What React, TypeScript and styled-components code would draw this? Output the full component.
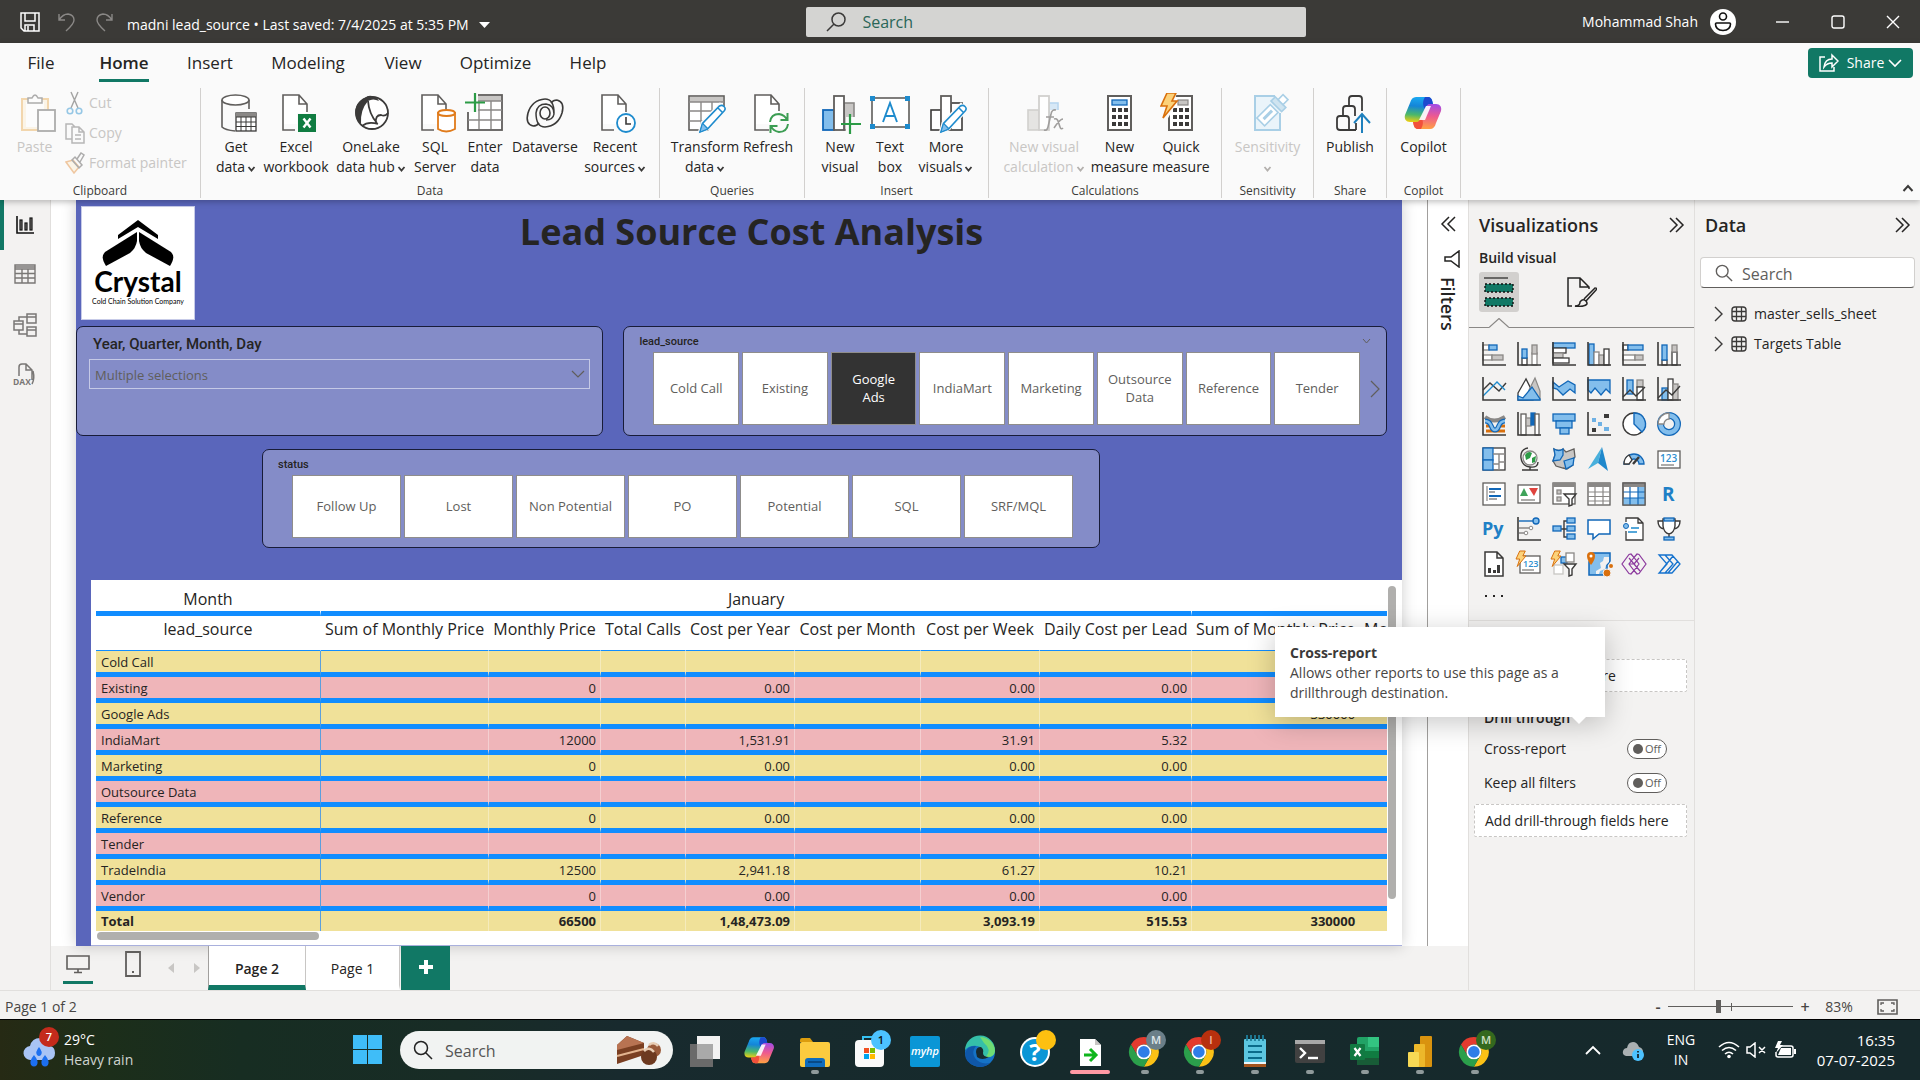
import React from "react";
import styled, { createGlobalStyle, css } from "styled-components";

const Global = createGlobalStyle`
  *, *::before, *::after { box-sizing: border-box; }
  html, body { margin: 0; padding: 0; }
  body {
    font-family: "Open Sans", "Noto Sans", sans-serif;
    font-size: 14px;
    line-height: 20px;
    color: #252423;
    background: #f3f2f1;
  }
  button, input, select { font: inherit; color: inherit; margin: 0; }
  button { background: none; border: 0; padding: 0; cursor: pointer; }
  svg { display: block; flex: none; }
  h1, h2, h3, p { margin: 0; }
`;

const GREEN = "#117865";
const INK = "#3b3a39";
const BLUE = "#1167b8";
const SKY = "#83beec";
const MID = "#8a8886";
const PALE = "#c8c6c4";

/* ---------- shell ---------- */

const Shell = styled.div`
  display: flex;
  flex-direction: column;
  min-height: 100vh;
`;

const TitleBar = styled.header`
  display: grid;
  grid-template-columns: 42fr 26fr 32fr;
  align-items: center;
  height: 43px;
  background: #3b3a37;
  color: #fff;
`;

const TitleLeft = styled.div`
  display: flex;
  align-items: center;
  gap: 17px;
  padding-left: 20px;
`;

const TitleText = styled.span`
  display: flex;
  align-items: center;
  gap: 10px;
  padding-top: 6px;
  margin-left: -4px;
  white-space: nowrap;
`;

const TopSearch = styled.label`
  display: flex;
  align-items: center;
  gap: 14px;
  height: 30px;
  padding: 0 20px;
  background: #d4d4d2;
  border-radius: 2px;
  input {
    flex: 1;
    min-width: 0;
    border: 0;
    outline: 0;
    background: none;
    font-size: 16px;
  }
  input::placeholder { color: #2a6658; opacity: 1; }
`;

const TitleRight = styled.div`
  display: flex;
  align-items: center;
  justify-content: flex-end;
  white-space: nowrap;
`;

const Avatar = styled.span`
  display: grid;
  place-items: center;
  width: 26px;
  height: 26px;
  margin: 0 19px 0 12px;
  border-radius: 50%;
  background: #fff;
`;

const WinButton = styled.button`
  display: grid;
  place-items: center;
  width: 55px;
  height: 40px;
`;

/* ---------- ribbon ---------- */

const Ribbon = styled.div`
  position: relative;
  z-index: 3;
  height: 157px;
  background: #fafafa;
  box-shadow: 0 2px 6px rgba(0, 0, 0, 0.25);
`;

const TabRow = styled.nav`
  display: flex;
  align-items: center;
  height: 45px;
  padding: 0 7px 2px 4px;
`;

const RibbonTab = styled.button<{ $w: number; $active?: boolean }>`
  width: ${(p) => p.$w}px;
  height: 40px;
  font-size: 17px;
  font-weight: ${(p) => (p.$active ? 600 : 400)};
  text-align: center;
  span {
    display: inline-block;
    padding: 6px 0;
    border-bottom: 3px solid ${(p) => (p.$active ? GREEN : "transparent")};
  }
`;

const ShareButton = styled.button`
  display: flex;
  align-items: center;
  justify-content: center;
  gap: 8px;
  width: 105px;
  height: 30px;
  margin: 0 0 3px auto;
  border-radius: 4px;
  background: ${GREEN};
  color: #fff;
  svg:last-child { margin-left: -4px; }
`;

const GroupRow = styled.div`
  display: flex;
  height: 110px;
`;

const Group = styled.section<{ $w: number; $pad?: number }>`
  display: flex;
  flex-direction: column;
  justify-content: space-between;
  width: ${(p) => p.$w}px;
  border-right: 1px solid #d2d0ce;
  & > div { display: flex; padding-left: ${(p) => p.$pad || 0}px; }
  h3 {
    font-size: 12px;
    font-weight: 400;
    line-height: 14px;
    text-align: center;
    color: ${INK};
  }
`;

const Tool = styled.button<{ $w: number; $off?: boolean }>`
  display: flex;
  flex-direction: column;
  align-items: center;
  width: ${(p) => p.$w}px;
  padding-top: 5px;
  white-space: nowrap;
  color: ${(p) => (p.$off ? "#c8c6c4" : "#252423")};
  svg { margin-bottom: 2px; }
  svg + span + span { display: flex; align-items: center; gap: 2px; min-height: 20px; }
  span svg { margin: 3px 0 0; }
`;

const ClipColumn = styled.div`
  display: flex;
  flex-direction: column;
`;

const ClipButton = styled.button`
  display: flex;
  align-items: center;
  gap: 4px;
  height: 30px;
  white-space: nowrap;
  color: #c8c6c4;
`;

const Collapse = styled.button`
  align-self: flex-end;
  margin: 0 6px 4px auto;
`;

/* ---------- workspace ---------- */

const Workspace = styled.div`
  display: flex;
  flex: 1;
  min-height: 0;
`;

const ViewRail = styled.nav`
  width: 51px;
  border-right: 1px solid #e1dfdd;
`;

const ViewButton = styled.button<{ $active?: boolean }>`
  display: grid;
  place-items: center;
  width: 50px;
  height: 50px;
  border-left: 4px solid ${(p) => (p.$active ? GREEN : "transparent")};
  padding-right: 4px;
`;

const Center = styled.div`
  display: flex;
  flex-direction: column;
  flex: 1;
  min-width: 0;
`;

const StageRow = styled.div`
  display: flex;
  flex: 1;
`;

const Stage = styled.main`
  display: flex;
  flex: 1;
  min-width: 0;
  padding: 0 25px;
  background: #fff;
`;

const Page = styled.div`
  display: flex;
  flex-direction: column;
  flex: 1;
  min-width: 0;
  background: #5a66bb;
  box-shadow: 0 0 14px rgba(0, 0, 0, 0.2);
`;

const PageHead = styled.div`
  display: flex;
  height: 126px;
  padding: 6px 94px 0 5px;
  h1 {
    flex: 1;
    font-size: 36px;
    line-height: 52px;
    font-weight: 700;
    text-align: center;
    white-space: nowrap;
  }
`;

const Logo = styled.div`
  display: flex;
  flex-direction: column;
  align-items: center;
  width: 114px;
  height: 114px;
  padding-top: 12px;
  background: #fff;
  border: 1px solid #c7cbe8;
  color: #000;
  strong {
    font-family: Lato, sans-serif;
    font-size: 28px;
    line-height: 28px;
    font-weight: 700;
  }
  small {
    font-family: Lato, sans-serif;
    font-size: 7px;
    line-height: 12px;
    font-weight: 400;
    white-space: nowrap;
  }
`;

const SlicerRow = styled.div`
  display: flex;
  gap: 20px;
  height: 110px;
  padding-right: 15px;
`;

const StatusRow = styled.div`
  display: flex;
  height: 99px;
  margin: 13px 302px 0 186px;
`;

const Slicer = styled.section<{ $grow: number }>`
  display: flex;
  flex-direction: column;
  flex: ${(p) => p.$grow} 1 0;
  min-width: 0;
  border: 1px solid #181c38;
  border-radius: 7px;
  background: #848cc8;
`;

const DateTitle = styled.label`
  padding: 7px 16px 5px;
  font-family: Roboto, sans-serif;
  font-size: 15px;
  font-weight: 500;
`;

const DateSelect = styled.div`
  display: grid;
  align-items: center;
  height: 30px;
  margin: 0 12px;
  border: 1px solid #c5c9e6;
  select, svg { grid-area: 1 / 1; }
  svg { justify-self: end; margin-right: 4px; pointer-events: none; }
  select {
    appearance: none;
    width: 100%;
    padding: 5px 5px 3px;
    border: 0;
    outline: 0;
    background: transparent;
    font-size: 13px;
    color: #605e5c;
  }
`;

const SlicerTitle = styled.h2`
  display: flex;
  align-items: center;
  justify-content: space-between;
  height: 25px;
  padding: 4px 15px 0;
  font-family: Roboto, sans-serif;
  font-size: 11px;
  line-height: 16px;
  font-weight: 500;
`;

const Tiles = styled.div<{ $n: number; $h: number }>`
  display: grid;
  grid-template-columns: repeat(${(p) => p.$n}, minmax(0, 1fr)) 23px;
  align-items: center;
  gap: 3px;
  height: ${(p) => p.$h}px;
  padding-left: 29px;
`;

const Tile = styled.button<{ $on?: boolean }>`
  height: 100%;
  padding: 0 9px 1px;
  border: 1px solid #8f8d8b;
  background: ${(p) => (p.$on ? "#333" : "#fff")};
  color: ${(p) => (p.$on ? "#fff" : "#605e5c")};
  font-size: 13px;
  line-height: 18px;
`;

const Next = styled.button`
  display: grid;
  place-items: center;
  height: 40px;
`;

/* ---------- matrix ---------- */

const Matrix = styled.section`
  display: grid;
  grid-template-columns: minmax(0, 1fr) 15px;
  flex: 1;
  margin: 32px 0 0 15px;
  padding: 6px 0 0 5px;
  background: #fff;
  border-bottom: 1px solid #a9b0dd;
`;

const MatrixScroll = styled.div`
  overflow: hidden;
`;

const Table = styled.table`
  width: 100%;
  table-layout: fixed;
  border-collapse: separate;
  border-spacing: 0;
  font-size: 13px;
  th, td {
    height: 26px;
    padding: 0 4px 0 5px;
    border-right: 1px solid rgba(255, 255, 255, 0.35);
    border-bottom: 5px solid #118dff;
    line-height: 20px;
    text-align: right;
    white-space: nowrap;
    overflow: hidden;
    font-weight: 400;
  }
  tr > :last-child { border-right: 0; }
  tbody tr > :nth-last-child(2), tfoot tr > :nth-last-child(2) { border-right: 0; padding-right: 5px; }
  thead th {
    height: 30px;
    padding: 2px 4px 0;
    font-size: 16px;
    line-height: 23px;
    text-align: center;
  }
  thead tr + tr th {
    height: 35px;
    border-bottom-width: 1px;
    vertical-align: top;
    &:last-child { text-align: left; }
  }
  tbody th, tfoot th { text-align: left; border-right-color: #5b9fdd; }
  tbody tr { background: #f0e199; }
  tbody tr:nth-child(even) { background: #efb5b9; }
  tfoot tr { background: #f0e199; }
  tfoot th, tfoot td { height: 20px; border-bottom: 0; font-weight: 700; line-height: 19px; }
`;

const HBar = styled.div`
  width: 222px;
  height: 8px;
  margin: 1px 0 0 1px;
  border-radius: 4px;
  background: #b0afad;
`;

const VBar = styled.div`
  width: 8px;
  height: 313px;
  margin-left: 1px;
  border-radius: 4px;
  background: #b0afad;
`;

/* ---------- page tabs + status ---------- */

const PageTabs = styled.div`
  display: flex;
  height: 44px;
`;

const LayoutButton = styled.button<{ $active?: boolean }>`
  display: grid;
  place-items: center;
  width: 30px;
  height: 38px;
  margin-left: 12px;
  border-bottom: 3px solid ${(p) => (p.$active ? GREEN : "transparent")};
  & + & { margin-left: 25px; }
`;

const Arrows = styled.div`
  display: flex;
  align-items: center;
  gap: 20px;
  padding: 0 8px 0 20px;
`;

const PageTab = styled.button<{ $active?: boolean }>`
  width: ${(p) => (p.$active ? 98 : 94)}px;
  padding-top: 6px;
  background: #fff;
  border-right: 1px solid #c8c6c4;
  border-bottom: 5px solid ${(p) => (p.$active ? GREEN : "#fff")};
  font-weight: ${(p) => (p.$active ? 600 : 400)};
  ${(p) =>
    p.$active &&
    css`
      border-left: 1px solid #a19f9d;
    `}
`;

const AddPage = styled.button`
  display: grid;
  place-items: center;
  width: 49px;
  padding-bottom: 2px;
  margin-left: 1px;
  background: ${GREEN};
`;

const StatusBar = styled.footer`
  display: flex;
  align-items: center;
  height: 29px;
  padding: 3px 22px 0 5px;
  border-top: 1px solid #e1dfdd;
  color: #484644;
  & > span:first-child { margin-right: auto; }
`;

const ZoomRange = styled.input`
  appearance: none;
  width: 125px;
  height: 14px;
  margin: 0 6px 0 4px;
  background: linear-gradient(#605e5c, #605e5c) center / 100% 1px no-repeat,
    linear-gradient(#605e5c, #605e5c) 63px center / 1px 8px no-repeat;
  &::-webkit-slider-thumb {
    appearance: none;
    width: 5px;
    height: 13px;
    background: #605e5c;
  }
`;

const ZoomMark = styled.button`
  width: 12px;
  font-size: 16px;
  font-weight: 600;
`;

const ZoomValue = styled.output`
  width: 50px;
  margin-right: 16px;
  text-align: center;
  padding-left: 6px;
`;

/* ---------- side panes ---------- */

const FiltersPane = styled.aside`
  display: flex;
  flex-direction: column;
  align-items: center;
  gap: 18px;
  width: 41px;
  padding-top: 16px;
  border-left: 1px solid #a19f9d;
  background: #fff;
  svg + svg { margin-left: 7px; }
  h2 {
    writing-mode: vertical-rl;
    margin-top: -9px;
    font-size: 18px;
    line-height: 20px;
    font-weight: 600;
  }
`;

const SidePane = styled.aside`
  width: 226px;
  border-left: 1px solid #e1dfdd;
`;

const PaneHead = styled.div`
  display: flex;
  align-items: center;
  justify-content: space-between;
  height: 49px;
  padding: 0 9px 0 10px;
  h2 { font-size: 18px; line-height: 24px; font-weight: 600; }
`;

const BuildTitle = styled.h3`
  padding: 0 10px;
  line-height: 18px;
  font-size: 14px;
  font-weight: 600;
`;

const ModeRow = styled.div`
  display: flex;
  gap: 43px;
  padding: 5px 10px 0;
`;

const ModeButton = styled.button<{ $on?: boolean }>`
  display: grid;
  place-items: center;
  width: 40px;
  height: 40px;
  border-radius: 3px;
  background: ${(p) => (p.$on ? "#d2d0ce" : "transparent")};
`;

const Notch = styled.div`
  display: flex;
  align-items: flex-end;
  height: 16px;
  &::before, &::after { content: ""; height: 1px; background: #8a8886; }
  &::before { width: 20px; }
  &::after { flex: 1; }
`;

const Gallery = styled.div`
  display: grid;
  grid-template-columns: repeat(6, 35px);
  grid-auto-rows: 35px;
  padding: 8px 0 0 7px;
  height: 293px;
  border-bottom: 1px solid #e1dfdd;
`;

const VisualButton = styled.button`
  display: grid;
  place-items: center;
`;

const Fields = styled.div`
  padding: 8px 7px 0 5px;
`;

const FieldTitle = styled.h3<{ $h: number }>`
  padding: 0 10px;
  height: ${(p) => p.$h}px;
  font-size: 14px;
  font-weight: 600;
`;

const DropBox = styled.div`
  padding: 6px 10px 5px;
  border: 1px dashed #c8c6c4;
  border-radius: 2px;
  background: #fff;
  white-space: nowrap;
`;

const Switches = styled.div`
  padding-top: 16px;
  & + ${DropBox} { margin-top: 4px; }
`;

const SwitchRow = styled.label`
  display: flex;
  align-items: center;
  justify-content: space-between;
  height: 34px;
  padding: 0 20px 0 10px;
`;

const Toggle = styled.span`
  display: flex;
  align-items: center;
  gap: 2px;
  width: 40px;
  height: 20px;
  padding-left: 5px;
  border: 1px solid #605e5c;
  border-radius: 10px;
  background: #fff;
  font-size: 11px;
  color: #605e5c;
  input {
    appearance: none;
    width: 10px;
    height: 10px;
    border-radius: 50%;
    background: #605e5c;
  }
`;

const DataSearch = styled.label`
  display: flex;
  align-items: center;
  gap: 9px;
  height: 31px;
  margin: 8px 5px 11px;
  padding: 0 14px;
  background: #fff;
  border: 1px solid #d2d0ce;
  border-bottom-color: #605e5c;
  border-radius: 4px;
  input {
    flex: 1;
    min-width: 0;
    border: 0;
    outline: 0;
    padding: 2px 0 0;
    background: none;
    font-size: 16px;
  }
  input::placeholder { color: #605e5c; opacity: 1; }
`;

const DataItem = styled.button`
  display: flex;
  align-items: center;
  gap: 7px;
  height: 30px;
  padding-left: 18px;
  white-space: nowrap;
  svg:first-child { margin-right: 1px; }
`;

const Tooltip = styled.div`
  position: absolute;
  z-index: 5;
  top: 627px;
  right: 315px;
  width: 330px;
  height: 90px;
  padding: 16px 15px;
  background: #fff;
  color: #484644;
  box-shadow: 0 6px 26px rgba(0, 0, 0, 0.22);
  strong { display: block; color: #3b3a39; }
  &::after {
    content: "";
    position: absolute;
    right: 19px;
    bottom: -7px;
    border: 7px solid transparent;
    border-top-color: #fff;
    border-bottom: 0;
  }
`;

/* ---------- taskbar ---------- */

const Taskbar = styled.footer`
  display: flex;
  align-items: center;
  height: 61px;
  border-top: 1px solid #000;
  color: #fff;
  background: linear-gradient(90deg, #262a14 0, #1c2e1a 110px, #172d22 240px, #182c26 460px, #182a2e 620px, #162a2c 1000px, #16292c 100%);
`;

const Weather = styled.button`
  display: flex;
  align-items: center;
  gap: 3px;
  width: 340px;
  padding-left: 22px;
  text-align: left;
  span span { display: block; line-height: 20px; }
  span span + span { color: #cfd4d0; }
`;

const StartButton = styled.button`
  display: grid;
  place-items: center;
  width: 55px;
  height: 58px;
`;

const TaskSearch = styled.label`
  display: flex;
  align-items: center;
  gap: 12px;
  width: 273px;
  height: 38px;
  margin: 0 4px 0 5px;
  padding: 0 10px 0 13px;
  border-radius: 19px;
  background: #f1f3f2;
  input {
    flex: 1;
    min-width: 0;
    border: 0;
    outline: 0;
    padding: 2px 0 0;
    background: none;
    font-size: 16px;
  }
  input::placeholder { color: #555; opacity: 1; }
`;

const TaskIcon = styled.button<{ $mark?: "open" | "front" }>`
  display: flex;
  flex-direction: column;
  align-items: center;
  width: 55px;
  height: 60px;
  padding-top: 9px;
  &::after {
    content: "";
    margin-top: 1px;
    height: 4px;
    border-radius: 2px;
    width: ${(p) => (p.$mark === "front" ? 40 : p.$mark ? 8 : 0)}px;
    background: ${(p) => (p.$mark === "front" ? "#ff99a4" : "#8f9a9b")};
  }
`;

const Tray = styled.div`
  display: flex;
  align-items: center;
  margin-left: auto;
  padding-right: 25px;
`;

const TrayItem = styled.button<{ $w: number }>`
  display: flex;
  align-items: center;
  justify-content: center;
  gap: 6px;
  width: ${(p) => p.$w}px;
`;

const TrayText = styled.button<{ $w: number; $end?: boolean }>`
  display: flex;
  flex-direction: column;
  align-items: ${(p) => (p.$end ? "flex-end" : "center")};
  width: ${(p) => p.$w}px;
  font-size: ${(p) => (p.$end ? 15 : 14)}px;
  line-height: 20px;
  white-space: nowrap;
`;

/* ---------- drawing helpers ---------- */

const box = (x: number, y: number, w: number, h: number, f = "#fff", s = INK, sw = 1.3) => (
  <rect x={x} y={y} width={w} height={h} fill={f} stroke={s} strokeWidth={sw} />
);
const ln = (d: string, s = INK, sw = 1.4, f = "none") => <path d={d} fill={f} stroke={s} strokeWidth={sw} />;

const Chev = ({ c = INK, s = 9 }: { c?: string; s?: number }) => (
  <svg width={s} height={s} viewBox="0 0 9 9">{ln("M1.5 3l3 3.5 3-3.5", c, 1.8)}</svg>
);
const Double = ({ left }: { left?: boolean }) => (
  <svg width="16" height="16" viewBox="0 0 16 16">
    {ln(left ? "M9 1L2 8l7 7M15 1L8 8l7 7" : "M1 1l7 7-7 7M7 1l7 7-7 7", "#252423", 1.5)}
  </svg>
);
const Lens = ({ c, s = 20, flip }: { c: string; s?: number; flip?: boolean }) => (
  <svg width={s} height={s} viewBox="0 0 20 20">
    {flip ? ln("M1 19l7-7M12.500 1a6.500 6.500 0 1 1 0 13 6.500 6.500 0 0 1 0-13z", c, 1.5) : ln("M19 19l-6-6M8 1.500a6.500 6.500 0 1 1 0 13 6.500 6.500 0 0 1 0-13z", c, 1.5)}
  </svg>
);

const docOpen = (
  <>
    <path d="M8 2h16l8 9v20H8z" fill="#fff" />
    {ln("M20 37H8V2h16l8 9v8M24 2v9h8", "#605e5c", 1.6)}
  </>
);
const pencil = (
  <>
    <path d="M16 39l2.500-9L36 12l5 5-17 18z" fill="#fff" stroke="#fafafa" strokeWidth="4" />
    {ln("M16 39l2.500-8.500L35.500 13q2.500-1.500 4.500.500t.500 4L23.500 36zM18.500 30.500l5 5M34 15l5 5", "#1e8bcd", 1.6, "#fff")}
    <path d="M16 39l2.500-8.500 5 5.500z" fill={SKY} stroke="#1e8bcd" />
  </>
);
const bolt = (x: number, y: number, k = 1) => (
  <path transform={`translate(${x} ${y}) scale(${k})`} d="M6 0h9l-4 8h5L2 25l4-12H0z" fill="#fcd27a" stroke="#d9700d" strokeWidth="1.600" />
);
const calc = (x: number) => (
  <>
    {box(x, 3, 23, 34, "#fff", "#605e5c", 2)}
    {[17, 24, 31].map((y) =>
      [0, 1, 2].map((i) => <rect key={`${y}-${i}`} x={x + 4 + i * 6} y={y - 2} width="4" height="4" fill={INK} />)
    )}
  </>
);

const Copilot = ({ size, id }: { size: number; id: string }) => (
  <svg width={size} height={size} viewBox="-1 -2 42 42">
    <defs>
      <linearGradient id={`${id}a`} x1="0.300" y1="0" x2="0.200" y2="1">
        <stop offset="0" stopColor="#1aa7f0" />
        <stop offset="0.350" stopColor="#1485d8" />
        <stop offset="0.700" stopColor="#4bb86a" />
        <stop offset="1" stopColor="#f2cf10" />
      </linearGradient>
      <linearGradient id={`${id}b`} x1="0.200" y1="1" x2="0.300" y2="0">
        <stop offset="0" stopColor="#a04be8" />
        <stop offset="0.500" stopColor="#ee5a8f" />
        <stop offset="1" stopColor="#ff9f45" />
      </linearGradient>
    </defs>
    <path transform="rotate(180 19 18)" fill={`url(#${id}b)`} d="M12 2h12c3 0 4 2 5 7h-3c-3 0-4 2-5 5l-2 8c-1 3-3 5-6 5H6c-4 0-6-3-5-7L6 8c1-4 3-6 6-6z" />
    <path fill={`url(#${id}a)`} d="M12 2h12c3 0 4 2 5 7h-3c-3 0-4 2-5 5l-2 8c-1 3-3 5-6 5H6c-4 0-6-3-5-7L6 8c1-4 3-6 6-6z" />
    <path fill="#1d49cf" d="M21 2h3c3 0 4 2 5 7h-3c-3 0-4 2-5 5-3-4-2-9 0-12z" />
    <path fill="#f2503b" d="M17 34h-3c-3 0-4-2-5-7h3c3 0 4-2 5-5 3 4 2 9 0 12z" />
    <path fill="#fff" d="M22 11h5l-6 14h-6z" opacity="0.900" />
  </svg>
);

const toolIcons: Record<string, React.ReactNode> = {
  paste: (
    <g opacity="0.400">
      {box(7, 6, 26, 31, "#fdeccb", "#e8a33d", 2)}
      {box(11, 9, 18, 25, "#fff", "none")}
      {ln("M13 10V5h4q3-6 6 0h4v5z", INK, 1.5, "#fff")}
      {box(23, 17, 17, 21, "#fff", INK, 1.8)}
    </g>
  ),
  get: (
    <>
      {ln("M7 7v27q3 3 13 4M34 7v9", "#605e5c", 1.6)}
      <ellipse cx="20.500" cy="7" rx="13.500" ry="5" fill="#fff" stroke="#605e5c" strokeWidth="1.600" />
      {box(21, 20, 20, 18, "#fff", INK)}
      <rect x="21" y="20" width="20" height="4" fill={MID} />
      {ln("M21 24h20M21 29h20M21 33.500h20M26 24v14M31 24v14M36 24v14", INK, 1)}
    </>
  ),
  excel: (
    <>
      {docOpen}
      <rect x="22" y="20" width="20" height="20" fill="#fafafa" />
      <rect x="23" y="21" width="18" height="18" fill="#107c41" />
      {ln("M28.500 25.500l7 9M35.500 25.500l-7 9", "#fff", 2.4)}
    </>
  ),
  onelake: (
    <>
      <circle cx="22" cy="20" r="16" fill="#fff" stroke={INK} strokeWidth="1.800" />
      <path d="M11 31C2 23 4 9 15 5q3-3 7-2 5 1 7 5-6-3-11 0-8 9-7 23z" fill={INK} />
      {ln("M18 8q1 13 9 22M26 30q-1-8 5-8 4 2 7-2M12 33q6-5 16-2", INK, 1.8)}
    </>
  ),
  sql: (
    <>
      {docOpen}
      <path d="M24 20v16q8 5 17 0V20z" fill="#fff" stroke="#e07b1b" strokeWidth="1.800" />
      <ellipse cx="32.500" cy="20" rx="8.500" ry="3" fill="#fff" stroke="#e07b1b" strokeWidth="1.800" />
    </>
  ),
  enter: (
    <>
      {box(4, 2, 34, 35, "#fff", "#605e5c", 1.8)}
      <rect x="5" y="3" width="32" height="5" fill={PALE} />
      {ln("M4 8h34M4 17h34M4 27h34M15 8v28M27 8v28", MID, 1.4)}
      <rect x="0" y="-1" width="14" height="20" fill="#fafafa" />
      {ln("M11 0v19M1 9.500h20", "#2c9b46", 2.2)}
    </>
  ),
  dataverse: (
    <>
      <ellipse cx="21" cy="20" rx="5" ry="6" fill="none" stroke={INK} strokeWidth="1.600" />
      {ln("M21 34q-9 0-9-14 1-9 10-9 8 1 8 10-1 6-8 6M21 6q9 0 9 14", INK, 1.500)}
      {ln("M9 33Q1 31 4 20 8 7 21 6M9 33q4 0 6-3M33 7q8 2 5 13-4 13-17 14M33 7q-4 0-6 3", INK, 1.600)}
    </>
  ),
  recent: (
    <>
      {docOpen}
      <circle cx="32" cy="30" r="9" fill="#fff" stroke="#1e8bcd" strokeWidth="1.800" />
      {ln("M32 24v7h5", INK, 1.6)}
    </>
  ),
  transform: (
    <>
      {box(5, 3, 35, 34, "#fff", "#605e5c", 1.6)}
      <rect x="6" y="4" width="33" height="5" fill={PALE} />
      {ln("M5 9h35M5 18h35M5 28h35M17 9v28M28 9v28", MID, 1.4)}
      <path d="M24 38h17V16z" fill="#fafafa" />
      {pencil}
    </>
  ),
  refresh: (
    <>
      <path d="M8 2h16l8 9v20H8z" fill="#fff" />
      {ln("M22 37H8V2h16l8 9v7M24 2v9h8", "#605e5c", 1.6)}
      {ln("M23 29q1-8 9-8 6 1 8 6M40.500 20v7h-7M41 31q-1 8-9 8-6-1-8-6M23.500 40v-7h7", "#3c9d53", 2)}
    </>
  ),
  newvisual: (
    <>
      {box(25, 10, 10, 27, PALE, MID, 1.6)}
      {box(4, 17, 11, 20, SKY, BLUE, 1.8)}
      {box(15, 3, 10, 34, "#fff", "#605e5c", 1.8)}
      <rect x="27" y="24" width="15" height="18" fill="#fafafa" />
      {ln("M31 21v20M22 31h20", "#2c9b46", 2.2)}
    </>
  ),
  textbox: (
    <>
      {box(3, 5, 37, 29, "#fff", "#605e5c", 1.6)}
      {[1, 36].map((x) => [3, 31].map((y) => <rect key={`${x}${y}`} x={x} y={y} width="5" height="5" fill="#1e8bcd" />))}
      {ln("M14 29l7-19 7 19M16.500 23h9", "#1e8bcd", 1.9)}
    </>
  ),
  more: (
    <>
      {box(6, 17, 10, 20, "#fff", INK, 1.6)}
      {box(26, 10, 11, 27, "#fff", INK, 1.6)}
      {box(16, 3, 10, 34, "#fff", "#605e5c", 1.8)}
      {pencil}
    </>
  ),
  calcvisual: (
    <g opacity="0.800">
      {box(5, 17, 11, 20, "#e1dfdd", PALE, 1.6)}
      {box(26, 10, 9, 14, "#cfe4f6", "#a9cfee", 1.6)}
      {box(16, 3, 10, 34, "#fff", PALE, 1.8)}
      <rect x="27" y="17" width="15" height="25" fill="#fafafa" />
      {ln("M33 17q-4-1-5 4l-3 13q-1 4-4 3M23 24h8M31 26q3-1 4 2l2 6q1 3 3 1M40 26q-3 0-9 9", MID, 1.6)}
    </g>
  ),
  measure: (
    <>
      {calc(9)}
      {box(13, 7, 15, 5, SKY, BLUE, 1.3)}
    </>
  ),
  quick: (
    <>
      {calc(9)}
      {box(18, 7, 10, 5, PALE, MID, 1.2)}
      <path d="M0 0h17l-3 9h3L7 27H4z" fill="#fafafa" />
      {bolt(1, 0)}
    </>
  ),
  sensitivity: (
    <>
      {ln("M33 20v17H8V3h20", "#a9cfe6", 2, "#eaf4fa")}
      <g transform="rotate(-45 24 18)">
        {box(9, 13, 19, 11, "#fff", "#a9cfe6", 1.6)}
        {ln("M13 18.500h12", "#a9cfe6", 3)}
        {box(31, 11, 6, 15, "#cfe4f0", "#a9cfe6", 1.6)}
        {box(37, 15, 7, 7, "#fff", "#a9cfe6", 1.6)}
      </g>
    </>
  ),
  publish: (
    <>
      {ln("M20 12V6q0-3 3-3h7q3 0 3 3v12M14 22v-6q0-3 3-3h6q3 0 3 3v7M27 37H11q-3 0-3-3V26q0-3 3-3h6q3 0 3 3v11M27 30v7", INK, 1.8)}
      {ln("M33 40V22M25 30l8-9 8 9", "#1e80bd", 2)}
    </>
  ),
};

const Label = ({ a, b, drop, off }: { a: string; b?: string; drop?: boolean; off?: boolean }) => (
  <>
    <span>{a}</span>
    <span>
      {b}
      {drop && <Chev c={off ? "#b3b0ad" : INK} />}
    </span>
  </>
);

type ToolDef = { id: string; w: number; a: string; b?: string; drop?: boolean; off?: boolean };
const groups: { name: string; w: number; pad: number; tools: ToolDef[] }[] = [
  {
    name: "Data", w: 459, pad: 9,
    tools: [
      { id: "get", w: 52, a: "Get", b: "data", drop: true },
      { id: "excel", w: 68, a: "Excel", b: "workbook" },
      { id: "onelake", w: 82, a: "OneLake", b: "data hub", drop: true },
      { id: "sql", w: 46, a: "SQL", b: "Server" },
      { id: "enter", w: 54, a: "Enter", b: "data" },
      { id: "dataverse", w: 66, a: "Dataverse" },
      { id: "recent", w: 74, a: "Recent", b: "sources", drop: true },
    ],
  },
  {
    name: "Queries", w: 145, pad: 7,
    tools: [
      { id: "transform", w: 76, a: "Transform", b: "data", drop: true },
      { id: "refresh", w: 50, a: "Refresh" },
    ],
  },
  {
    name: "Insert", w: 184, pad: 12,
    tools: [
      { id: "newvisual", w: 46, a: "New", b: "visual" },
      { id: "textbox", w: 54, a: "Text", b: "box" },
      { id: "more", w: 58, a: "More", b: "visuals", drop: true },
    ],
  },
  {
    name: "Calculations", w: 233, pad: 11,
    tools: [
      { id: "calcvisual", w: 88, a: "New visual", b: "calculation", drop: true, off: true },
      { id: "measure", w: 63, a: "New", b: "measure" },
      { id: "quick", w: 60, a: "Quick", b: "measure" },
    ],
  },
  { name: "Sensitivity", w: 92, pad: 0, tools: [{ id: "sensitivity", w: 91, a: "Sensitivity", drop: true, off: true }] },
  { name: "Share", w: 73, pad: 0, tools: [{ id: "publish", w: 72, a: "Publish" }] },
  { name: "Copilot", w: 74, pad: 0, tools: [{ id: "copilot", w: 73, a: "Copilot" }] },
];

/* ---------- visual gallery ---------- */

const axis = ln("M1 0v23h23", INK, 1.6);
const boltMini = bolt(-1, -1, 0.62);
const funnel = ln("M12 12h12l-4 5v6l-3 1v-7z", INK, 1.4, "#fff");

const visuals: [string, React.ReactNode][] = [
  ["Stacked bar chart", <>{box(1, 3, 6, 5, "#fff", MID)}{box(7, 3, 8, 5, SKY, BLUE)}{box(1, 13, 9, 5, "#fff", MID)}{box(10, 13, 11, 5, PALE, MID)}{axis}</>],
  ["Stacked column chart", <>{box(5, 16, 5, 7)}{box(5, 7, 5, 9, SKY, BLUE)}{box(15, 11, 5, 12, "#fff", MID)}{box(15, 3, 5, 9, PALE, MID)}{axis}</>],
  ["Clustered bar chart", <>{box(1, 1, 22, 5, SKY, BLUE)}{box(1, 6, 13, 5)}{box(1, 11, 10, 5, PALE, MID)}{box(1, 16, 16, 5)}{axis}</>],
  ["Clustered column chart", <>{box(2, 2, 5, 21, SKY, BLUE)}{box(7, 10, 5, 13, "#fff", MID)}{box(12, 13, 5, 10, PALE, MID)}{box(17, 7, 5, 16)}{axis}</>],
  ["100% stacked bar chart", <>{box(1, 3, 5, 5)}{box(6, 3, 15, 5, SKY, BLUE)}{box(1, 13, 12, 5, "#fff", MID)}{box(13, 13, 8, 5, PALE, MID)}{axis}</>],
  ["100% stacked column chart", <>{box(5, 18, 5, 5)}{box(5, 3, 5, 15, SKY, BLUE)}{box(15, 10, 5, 13)}{box(15, 3, 5, 7, PALE, MID)}{axis}</>],
  ["Line chart", <>{ln("M1 13l7-7 9 8 7-8")}{ln("M1 19L15 5l8 8", "#1e8bcd")}{axis}</>],
  ["Area chart", <>{ln("M1 16l8-14 7 14v7H1z", INK, 1.3, "#fff")}{ln("M12 13l6-12 5 13v9H12z", MID, 1.2, PALE)}{ln("M1 23v-4l5 2 9-11 8 12v1z", BLUE, 1.3, SKY)}</>],
  ["Stacked area chart", <>{ln("M1 5l6 5 9-6 7 4v8l-5-4-7 6-6-6-4-1z", BLUE, 1.3, SKY)}{axis}</>],
  ["100% stacked area chart", <>{ln("M1 3h22v13l-4-4-5 6-6-7-4 5-3-3z", BLUE, 1.3, SKY)}{axis}</>],
  ["Line and stacked column", <>{box(5, 3, 6, 14, SKY, BLUE)}{box(15, 3, 6, 7, PALE, MID)}{box(15, 10, 6, 13)}{ln("M1 20l7-7 6 6 9-9")}{axis}</>],
  ["Line and clustered column", <>{box(5, 11, 6, 12, SKY, BLUE)}{box(11, 2, 5, 21)}{box(16, 7, 5, 16, PALE, MID)}{ln("M1 21l8-8 6 5 8-9")}{axis}</>],
  ["Ribbon chart", <>{ln("M4 14h6M17 14h6M4 19h19", "#d9700d", 3)}{ln("M3 5q9 7 20 0", MID, 4)}{ln("M3 9c8 0 5 9 10 9s2-9 10-9", BLUE, 5)}{ln("M3 9c8 0 5 9 10 9s2-9 10-9", SKY, 2.5)}{axis}</>],
  ["Waterfall chart", <>{box(4, 2, 5, 21, "#fff", "#605e5c")}{box(9, 6, 5, 8, PALE, MID)}{box(14, 1, 4, 12, BLUE, BLUE)}{box(18, 2, 4, 21, "#fff", "#605e5c")}{axis}</>],
  ["Funnel chart", <>{box(1, 2, 22, 7, SKY, BLUE)}{box(4, 9, 16, 7, SKY, BLUE)}{box(8, 16, 9, 6, SKY, BLUE)}</>],
  ["Scatter chart", <><path d="M5 6h4v4H5zM11 10h4v4h-4zM17 15h5v4h-5z" fill="#6fb1e4" /><path d="M17 2h5v4h-5zM5 16h4v4H5z" fill={INK} />{axis}</>],
  ["Pie chart", <><circle cx="12" cy="12" r="11" fill="#fff" stroke={INK} strokeWidth="1.400" />{ln("M12 1v11l8 8A11 11 0 0 0 12 1z", BLUE, 1.4, SKY)}</>],
  ["Donut chart", <><circle cx="12" cy="12" r="8.500" fill="none" stroke={BLUE} strokeWidth="7" /><circle cx="12" cy="12" r="8.500" fill="none" stroke={SKY} strokeWidth="4.500" />{ln("M12 1A11 11 0 0 0 1 12h6a5 5 0 0 1 5-5z", MID, 1.3, "#fff")}</>],
  ["Treemap", <>{box(1, 1, 22, 22)}{box(1, 1, 10, 12, SKY, BLUE)}{box(1, 13, 10, 10, SKY, BLUE)}{ln("M11 7h12M17 7v10M11 17h6v6M17 15h6", MID)}</>],
  ["Map", <><circle cx="13" cy="11" r="7" fill="#fff" stroke={MID} strokeWidth="1.300" /><path d="M8 8q3-5 7-2l-2 5-4 2zM15 11l4-2-1 6-3 1z" fill="#2c9b46" />{ln("M11 1Q3 2 4 11q1 8 9 9t8-5M13 20v3M5 23h16")}</>],
  ["Filled map", <>{ln("M2 2q5 3 9 0l3 3 8-3 1 8-3 3 1 5-6 4-4-1-7-2-3-5 2-6z", "#605e5c", 1.3, PALE)}{ln("M2 2q5 3 9 0v6l-3 5-7 1 2-6z", BLUE, 1.3, SKY)}{ln("M12 14l10-3-1 7-7 4z", BLUE, 1.3, SKY)}</>],
  ["Azure map", <><path d="M15 0L1 22l10-6z" fill="#48b0dc" /><path d="M15 0l6 24-10-8z" fill="#1e88cc" /></>],
  ["Gauge", <>{ln("M2 17a10 10 0 0 1 20 0h-5a5 5 0 0 0-10 0z", BLUE, 1.3, SKY)}{ln("M2 17a10 10 0 0 1 5-9l3 5-3 4z", INK, 1.3, "#fff")}{ln("M11 17l6-7", INK, 2.4)}</>],
  ["Card", <>{box(1, 4, 22, 17, "#fff", "#605e5c")}<text x="3" y="15" fontSize="10" fontWeight="600" fill="#2f8fd0">123</text>{ln("M4 18h13", MID)}</>],
  ["Multi-row card", <>{box(1, 1, 22, 22, "#fff", "#605e5c")}{ln("M5 4v15", MID, 1.2)}{ln("M7 7h12M7 14h12", BLUE, 2)}{ln("M7 10h6M7 17h8", MID)}</>],
  ["KPI", <>{box(1, 3, 22, 18, "#fff", "#605e5c")}<path d="M3 14l4-8 4 8z" fill="#3fa35a" /><path d="M12 6h9l-4 8z" fill="#e0443e" />{ln("M4 18h14", MID)}</>],
  ["Slicer", <>{box(1, 1, 22, 21, "#fff", "#605e5c")}<rect x="1" y="1" width="22" height="4" fill={MID} />{box(5, 8, 4, 4, PALE, MID)}{box(5, 15, 4, 4, PALE, MID)}{funnel}</>],
  ["Table", <>{box(1, 1, 22, 22, "#fff", "#605e5c")}<rect x="1" y="1" width="22" height="4" fill={MID} />{ln("M1 10h22M1 14.500h22M1 19h22M8 5v18M16 5v18", MID, 1.2)}</>],
  ["Matrix", <>{box(1, 1, 22, 22, "#fff", "#605e5c")}<rect x="16" y="5" width="7" height="18" fill={SKY} /><rect x="1" y="16" width="22" height="7" fill={SKY} /><rect x="1" y="1" width="22" height="4" fill={MID} />{ln("M1 10h22M1 16h22M8 5v18M16 5v18", BLUE, 1.2)}{box(1, 1, 22, 22, "none", "#605e5c")}</>],
  ["R script visual", <text x="5" y="19" fontSize="19" fontWeight="700" fill="#1e80c6">R</text>],
  ["Python visual", <text x="0" y="18" fontSize="18" fontWeight="700" fill="#1e80c6">Py</text>],
  ["Key influencers", <>{ln("M2 4h15", BLUE)}<circle cx="19" cy="4" r="3" fill={SKY} stroke={BLUE} strokeWidth="1.400" />{ln("M2 11h10M2 16h5", MID)}<circle cx="14" cy="11" r="1.800" fill="#fff" stroke={MID} /><circle cx="9" cy="16" r="1.800" fill="#fff" stroke={MID} />{axis}</>],
  ["Decomposition tree", <>{ln("M9 12h6M16 4h-4v16h4")}{box(1, 9, 8, 5, SKY, BLUE)}{box(15, 1, 8, 5, SKY, BLUE)}{box(15, 9, 8, 5, SKY, BLUE)}{box(15, 17, 8, 5, SKY, BLUE)}</>],
  ["Q&A", ln("M1 3h22v14H12l-6 5v-5H1z", BLUE, 1.5, "#fff")],
  ["Narrative", <>{ln("M4 5V1h12l5 5v17H4v-9M16 1v5h5", INK, 1.3, "#fff")}<circle cx="4" cy="9" r="2.500" fill={SKY} stroke={BLUE} />{ln("M9 11h8M6 15h9", "#1e8bcd")}</>],
  ["Goals", <>{ln("M6 2h12v7q-1 7-6 8-5-1-6-8zM6 4H1q0 7 6 8M18 4h5q0 7-6 8M12 17v3", INK, 1.4, "#fff")}{box(7, 1, 10, 3, SKY, BLUE)}{box(7, 20, 10, 3, SKY, BLUE)}</>],
  ["Paginated report", <>{ln("M3 0h12l6 6v18H3zM15 0v6h6", INK, 1.5, "#fff")}<path d="M6 16h3v5H6zM11 18h3v3h-3zM15 13h3v8h-3z" fill={INK} /></>],
  ["New card", <>{box(3, 4, 20, 17, "#fff", "#605e5c")}<text x="6" y="15" fontSize="9" fontWeight="600" fill="#2f8fd0">123</text>{ln("M5 18h12", MID)}{boltMini}</>],
  ["New slicer", <>{box(9, 5, 6, 6, SKY, BLUE)}{box(14, 1, 8, 9, "#fff", MID)}{box(2, 13, 9, 9, "#fff", PALE)}{funnel}{boltMini}</>],
  ["ArcGIS map", <>{ln("M6 1h17v8l-3 4v10H2V10z", BLUE, 1.5, SKY)}<path d="M9 22v-3l5-3-1-5 3-2 1-4h5v5l-3 3-1 4-5 2-1 3z" fill="#f3f2f1" /><path d="M0 4a4 4 0 0 1 8 0q0 4-4 9-4-5-4-9z" fill="#d9700d" /><circle cx="4" cy="4" r="1.500" fill="#fff" /><circle cx="20" cy="21" r="4" fill="#d9700d" stroke="#f3f2f1" /><circle cx="24" cy="14" r="2" fill="#d9700d" /></>],
  ["Power Apps", ln("M9 2l3 3.500L15 2l2 .500L24 12l-7 9.500-2 .500-3-3.500L9 22l-2-.500L0 12l7-9.500zM12 5.500L7 12l5 6.500 5-6.500zM7 12h5M12 12l-5-6M12 12l6 7M12 12l5-6", "#8c3a9e", 1.2)],
  ["Power Automate", ln("M2 3h13l8 9-8 9H2l8-9zM8 3l8 9-8 9M16 4L3 20M21 9L11 21", "#1472ce", 1.3)],
];

/* ---------- matrix data ---------- */

const colWidths = [225, 168, 112, 85, 109, 126, 119, 152, 168];
const heads = ["Sum of Monthly Price", "Monthly Price", "Total Calls", "Cost per Year", "Cost per Month", "Cost per Week", "Daily Cost per Lead", "Sum of Monthly Price", "Monthly Price"];
const zero = ["", "0", "", "0.00", "", "0.00", "0.00", "", ""];
const none = ["", "", "", "", "", "", "", "", ""];
const rows: [string, string[]][] = [
  ["Cold Call", none],
  ["Existing", zero],
  ["Google Ads", ["", "", "", "", "", "", "", "330000", ""]],
  ["IndiaMart", ["", "12000", "", "1,531.91", "", "31.91", "5.32", "", ""]],
  ["Marketing", zero],
  ["Outsource Data", none],
  ["Reference", zero],
  ["Tender", none],
  ["TradeIndia", ["", "12500", "", "2,941.18", "", "61.27", "10.21", "", ""]],
  ["Vendor", zero],
];
const totals = ["", "66500", "", "1,48,473.09", "", "3,093.19", "515.53", "330000", ""];

/* ---------- taskbar icons ---------- */

const Badge = ({ c, t, k = "#fff", x = 30, y = 10 }: { c: string; t: string; k?: string; x?: number; y?: number }) => (
  <>
    <circle cx={x} cy={y} r="10" fill={c} />
    <text x={x} y={y + 4} fontSize="11" fontWeight="600" fill={k} textAnchor="middle">{t}</text>
  </>
);
const chrome = (
  <g transform="translate(4 9) scale(1.240)">
    <path fill="#e33b2e" d="M12 6h10.400A12 12 0 0 0 1.600 6l5.200 9A6 6 0 0 1 12 6z" />
    <path fill="#fbc116" d="M22.400 6H12a6 6 0 0 1 5.200 9L12 24A12 12 0 0 0 22.400 6z" />
    <path fill="#2b9f4b" d="M1.600 6A12 12 0 0 0 12 24l5.200-9a6 6 0 0 1-10.400 0z" />
    <circle cx="12" cy="12" r="6" fill="#fff" />
    <circle cx="12" cy="12" r="4.700" fill="#2f7de8" />
  </g>
);

const tasks: [string, "open" | "front" | undefined, React.ReactNode][] = [
  ["Task view", undefined, <><rect x="12" y="8" width="23" height="23" fill="#f2f2f2" /><rect x="5" y="16" width="23" height="23" fill="#6a6a6a" /><rect x="12" y="16" width="16" height="15" fill="#a9a9a9" /></>],
  ["Copilot", undefined, <svg x="3" y="6" width="34" height="34"><Copilot size={34} id="task" /></svg>],
  ["File Explorer", "open", <><path d="M5 12q0-2 2-2h8l3 4H5z" fill="#dc9d0e" /><rect x="5" y="14" width="30" height="25" rx="2" fill="#fccb3f" /><path d="M10 39v-6q0-3 3-3h14q3 0 3 3v6z" fill="#0f6cbd" /><rect x="13" y="33" width="14" height="2" fill="#084a86" /></>],
  ["Microsoft Store", undefined, <>{ln("M13 13V9h14v4", "#35c1f1", 2)}<rect x="5" y="12" width="29" height="27" rx="4" fill="#fafafa" /><path d="M14 20h5v5h-5z" fill="#f25022" /><path d="M20 20h5v5h-5z" fill="#7fba00" /><path d="M14 26h5v5h-5z" fill="#00a4ef" /><path d="M20 26h5v5h-5z" fill="#ffb900" /><Badge c="#4cc2ff" t="1" k="#111" x={31} y={12} /></>],
  ["myHP", undefined, <><rect x="5" y="8" width="30" height="31" rx="2" fill="#0a96d6" /><text x="20" y="27" fontSize="11" fontStyle="italic" fontWeight="600" fill="#fff" textAnchor="middle">myhp</text></>],
  ["Edge", undefined, <><circle cx="20" cy="24" r="15" fill="#1572c6" /><path d="M5 22a15 15 0 0 1 30 1q-1 7-9 6-4-1-3-4 0-6-6-7-7-1-12 4z" fill="#35bfa9" /><path d="M20 9a15 15 0 0 1 15 14q-1 7-9 6 6-8-2-14z" fill="#6fdc73" /><path d="M5 25q3-8 11-7-5 6-1 12 5 7 15 5-7 6-15 3Q5 35 5 25z" fill="#0f57a8" /><path d="M16 24q0-5 5-5 3 2 2 6 0 4 6 4-7 4-12 0z" fill="#182a2e" /></>],
  ["HP Support", undefined, <><circle cx="20" cy="24" r="15" fill="#fff" /><circle cx="20" cy="24" r="13" fill="#0a96d6" /><text x="20" y="33" fontSize="24" fontWeight="700" fill="#fff" textAnchor="middle">?</text><circle cx="31" cy="12" r="10" fill="#fdc010" /></>],
  ["Document transfer", "front", <><path d="M10 11h15l6 6v21H10z" fill="#fff" /><path d="M25 11v6h6z" fill="#c8c6c4" />{ln("M14 27h11M20 21l6 6-6 6", "#0fb51c", 3)}</>],
  ["Chrome M", "open", <>{chrome}<Badge c="#6b7f89" t="M" k="#dfe6ea" x={31} y={12} /></>],
  ["Chrome I", "open", <>{chrome}<Badge c="#b8300e" t="I" k="#f0b7a6" x={31} y={12} /></>],
  ["Notepad", "open", <><rect x="9" y="11" width="22" height="26" rx="1" fill="#5cc6e0" /><rect x="9" y="36" width="22" height="3" fill="#a3541d" /><path d="M9 34h22v2H9z" fill="#eaf7fb" />{ln("M13 18h14M13 24h14M13 30h14", "#0a6b8a", 1.8)}{ln("M12 7v6M16 7v6M20 7v6M24 7v6M28 7v6", "#1f7f9c", 1.8)}</>],
  ["Terminal", "open", <><rect x="5" y="12" width="30" height="23" rx="2" fill="#414141" /><path d="M5 12h30v4H5z" fill="#a8a8a8" />{ln("M10 20l5 5-5 5", "#fff", 2.4)}{ln("M18 30h10", "#fff", 2.4)}</>],
  ["Excel", "open", <><rect x="12" y="9" width="22" height="28" rx="2" fill="#21a366" /><path d="M23 9h11v10H23z" fill="#33c481" /><path d="M12 23h22v14H12z" fill="#107c41" /><path d="M12 30h22v7H12z" fill="#185c37" /><rect x="5" y="16" width="15" height="16" rx="1" fill="#117a42" />{ln("M9.500 20l6 8M15.500 20l-6 8", "#fff", 2.2)}</>],
  ["Power BI", "open", <><rect x="20" y="8" width="12" height="31" rx="1" fill="#d9930f" /><rect x="14" y="16" width="11" height="23" rx="1" fill="#edb82a" /><rect x="8" y="24" width="11" height="15" rx="1" fill="#f7d954" /></>],
  ["Chrome", "open", <>{chrome}<Badge c="#34691e" t="M" k="#cfe0c4" x={31} y={12} /></>],
];

const TABS: [string, number][] = [["File", 74], ["Home", 92], ["Insert", 80], ["Modeling", 116], ["View", 74], ["Optimize", 111], ["Help", 74]];

export default function App() {
  return (
    <Shell>
      <Global />
      <TitleBar>
        <TitleLeft>
          <svg width="20" height="20" viewBox="0 0 20 20">{ln("M1 1h18v18H4l-3-3zM5 1v8h10V1M5 19v-6h9v6M8 14v5", "#fff", 1.5)}</svg>
          <svg width="20" height="20" viewBox="0 0 20 20">{ln("M2 2v6h6M2 8Q6 2 11 2q6 1 6 6 0 4-8 11", "#8a8886", 1.4)}</svg>
          <svg width="20" height="20" viewBox="0 0 20 20">{ln("M18 2v6h-6M18 8Q14 2 9 2 3 3 3 8q0 4 8 11", "#8a8886", 1.4)}</svg>
          <TitleText>
            madni lead_source • Last saved: 7/4/2025 at 5:35 PM
            <svg width="11" height="6" viewBox="0 0 11 6"><path d="M0 0h11L5.500 6z" fill="#fff" /></svg>
          </TitleText>
        </TitleLeft>
        <TopSearch>
          <Lens c={INK} flip />
          <input type="search" placeholder="Search" aria-label="Search" />
        </TopSearch>
        <TitleRight>
          <span>Mohammad Shah</span>
          <Avatar>
            <svg width="18" height="20" viewBox="0 0 18 20">{ln("M9 1a3.500 3.500 0 1 1 0 7 3.500 3.500 0 0 1 0-7zM2.500 11h13q1 0 1 1 0 6-7.500 6.500Q1.500 18 1.500 12q0-1 1-1z", "#111", 1.6)}</svg>
          </Avatar>
          <WinButton aria-label="Minimize"><svg width="14" height="14" viewBox="0 0 14 14">{ln("M0 7h13", "#fff", 1.4)}</svg></WinButton>
          <WinButton aria-label="Maximize"><svg width="14" height="14" viewBox="0 0 14 14"><rect x="1" y="1" width="12" height="12" rx="2" fill="none" stroke="#fff" strokeWidth="1.400" /></svg></WinButton>
          <WinButton aria-label="Close"><svg width="14" height="14" viewBox="0 0 14 14">{ln("M1 1l12 12M13 1L1 13", "#fff", 1.4)}</svg></WinButton>
        </TitleRight>
      </TitleBar>

      <Ribbon>
        <TabRow>
          {TABS.map(([t, w]) => (
            <RibbonTab key={t} $w={w} $active={t === "Home"}><span>{t}</span></RibbonTab>
          ))}
          <ShareButton>
            <svg width="20" height="20" viewBox="0 0 20 20">{ln("M6 4H1v14h14v-4M5 14q1-8 8-8V2l6 6-6 6v-4q-5 0-8 4z", "#fff", 1.5)}</svg>
            Share
            <svg width="14" height="10" viewBox="0 0 14 10">{ln("M1 2l6 6 6-6", "#fff", 1.6)}</svg>
          </ShareButton>
        </TabRow>
        <GroupRow>
          <Group $w={201} $pad={4}>
            <div>
              <Tool $w={61} $off>
                <svg width="42" height="42" viewBox="-1 0 42 42">{toolIcons.paste}</svg>
                <Label a="Paste" />
              </Tool>
              <ClipColumn>
                <ClipButton>
                  <svg width="20" height="24" viewBox="0 0 20 24"><g opacity="0.450">{ln("M6 1l7 16M13 1L6 17", INK, 1.4)}<circle cx="5" cy="20" r="2.800" fill="none" stroke="#1e8bcd" strokeWidth="1.600" /><circle cx="14" cy="20" r="2.800" fill="none" stroke="#1e8bcd" strokeWidth="1.600" /></g></svg>
                  Cut
                </ClipButton>
                <ClipButton>
                  <svg width="20" height="22" viewBox="0 0 20 22"><g opacity="0.350">{ln("M7 17H1V2h6l3 3M7 5h7l5 5v11H7zM14 5v5h5M10 13h6M10 17h6", INK, 1.5)}</g></svg>
                  Copy
                </ClipButton>
                <ClipButton>
                  <svg width="20" height="22" viewBox="0 0 20 22"><g opacity="0.400">{ln("M1 10l7-2 6 7-5 6z", "#e07b1b", 1.5, "#fdeccb")}{ln("M7 8l3-3 7 8-3 3zM12 7l4-6 3 2-4 7", INK, 1.5)}</g></svg>
                  Format painter
                </ClipButton>
              </ClipColumn>
            </div>
            <h3>Clipboard</h3>
          </Group>
          {groups.map((g) => (
            <Group key={g.name} $w={g.w} $pad={g.pad}>
              <div>
                {g.tools.map((t) => (
                  <Tool key={t.id} $w={t.w} $off={t.off} disabled={t.off}>
                    {t.id === "copilot" ? <Copilot size={42} id="rib" /> : <svg width="42" height="42" viewBox="0 0 42 42">{toolIcons[t.id]}</svg>}
                    <Label a={t.a} b={t.b} drop={t.drop} off={t.off} />
                  </Tool>
                ))}
              </div>
              <h3>{g.name}</h3>
            </Group>
          ))}
          <Collapse aria-label="Collapse ribbon"><svg width="12" height="12" viewBox="0 0 12 12">{ln("M1.500 9L6 4l4.500 5", INK, 2)}</svg></Collapse>
        </GroupRow>
      </Ribbon>

      <Workspace>
        <ViewRail>
          <ViewButton $active aria-label="Report view"><svg width="18" height="18" viewBox="0 0 18 18">{ln("M1 0v17h17", "#111", 1.6)}{box(4, 4, 2, 10, MID, "#111", 1.2)}{box(9, 7, 2, 7, MID, "#111", 1.2)}{box(14, 2, 2, 12, MID, "#111", 1.2)}</svg></ViewButton>
          <ViewButton aria-label="Table view"><svg width="22" height="22" viewBox="0 0 22 22">{ln("M1 1h20v18H1zM1 5h20M1 9.500h20M1 14h20M8 5v14M14 5v14M1 3h20", "#797775", 1.4)}</svg></ViewButton>
          <ViewButton aria-label="Model view"><svg width="24" height="24" viewBox="0 0 24 24">{ln("M1 8h9v9H1zM1 11h9M14 1h9v9h-9zM14 4h9M14 14h9v9h-9zM14 17h9M6 8V4h8M6 17v4h8", "#797775", 1.5)}</svg></ViewButton>
          <ViewButton aria-label="DAX query view"><svg width="24" height="24" viewBox="0 0 24 24">{ln("M6 13V4q0-3 3-3h4l6 6v10M13 1v6h6M20 8q2 8-1 13", "#797775", 1.5)}<text x="0" y="22" fontSize="8.500" fontWeight="700" fill="#797775">DAX</text></svg></ViewButton>
        </ViewRail>

        <Center>
          <StageRow>
            <Stage>
              <Page>
                <PageHead>
                  <Logo>
                    <svg width="74" height="48" viewBox="0 0 74 48">
                      <path d="M37 1l20 15v4L37 8 17 20v-4z" />
                      <path d="M36 13v9q-1 7-7 12L5 47q-6-9-1-14z" />
                      <path d="M38 13v9q1 7 7 12l24 13q6-9 1-14z" />
                    </svg>
                    <strong>Crystal</strong>
                    <small>Cold Chain Solution Company</small>
                  </Logo>
                  <h1>Lead Source Cost Analysis</h1>
                </PageHead>

                <SlicerRow>
                  <Slicer $grow={527}>
                    <DateTitle htmlFor="dates">Year, Quarter, Month, Day</DateTitle>
                    <DateSelect>
                      <select id="dates"><option>Multiple selections</option></select>
                      <svg width="14" height="9" viewBox="0 0 14 9">{ln("M1 1l6 6 6-6", "#605e5c", 1.2)}</svg>
                    </DateSelect>
                  </Slicer>
                  <Slicer $grow={764}>
                    <SlicerTitle>lead_source<svg width="9" height="7" viewBox="0 0 9 7">{ln("M1 1l3.500 4L8 1", "#605e5c", 1)}</svg></SlicerTitle>
                    <Tiles $n={8} $h={73}>
                      {["Cold Call", "Existing", "Google Ads", "IndiaMart", "Marketing", "Outsource Data", "Reference", "Tender"].map((t) => (
                        <Tile key={t} $on={t === "Google Ads"}>{t}</Tile>
                      ))}
                      <Next aria-label="Next"><svg width="10" height="18" viewBox="0 0 10 18">{ln("M1 1l8 8-8 8", "#605e5c", 1.2)}</svg></Next>
                    </Tiles>
                  </Slicer>
                </SlicerRow>

                <StatusRow>
                  <Slicer $grow={1}>
                    <SlicerTitle>status</SlicerTitle>
                    <Tiles $n={7} $h={63}>
                      {["Follow Up", "Lost", "Non Potential", "PO", "Potential", "SQL", "SRF/MQL"].map((t) => <Tile key={t}>{t}</Tile>)}
                    </Tiles>
                  </Slicer>
                </StatusRow>

                <Matrix>
                  <MatrixScroll>
                    <Table>
                      <colgroup>
                        {colWidths.map((w, i) => <col key={i} style={{ width: w }} />)}
                        <col />
                      </colgroup>
                      <thead>
                        <tr><th>Month</th><th colSpan={7}>January</th><th colSpan={2} /></tr>
                        <tr><th>lead_source</th>{heads.map((h, i) => <th key={i}>{h}</th>)}</tr>
                      </thead>
                      <tbody>
                        {rows.map(([name, cells]) => (
                          <tr key={name}><th scope="row">{name}</th>{cells.map((c, i) => <td key={i}>{c}</td>)}</tr>
                        ))}
                      </tbody>
                      <tfoot>
                        <tr><th scope="row">Total</th>{totals.map((c, i) => <td key={i}>{c}</td>)}</tr>
                      </tfoot>
                    </Table>
                    <HBar />
                  </MatrixScroll>
                  <VBar />
                </Matrix>
              </Page>
            </Stage>

            <FiltersPane>
              <Double left />
              <svg width="16" height="18" viewBox="0 0 16 18">{ln("M15 1v16L7 11H1V7h6z", "#252423", 1.5)}</svg>
              <h2>Filters</h2>
            </FiltersPane>
          </StageRow>

          <PageTabs>
            <LayoutButton $active aria-label="Desktop layout"><svg width="24" height="20" viewBox="0 0 24 20">{ln("M1 2h22v13H1zM12 15v3M8 18.500h8", "#605e5c", 1.6)}</svg></LayoutButton>
            <LayoutButton aria-label="Mobile layout"><svg width="16" height="26" viewBox="0 0 16 26">{ln("M1 1h14v24H1zM7 21h2", "#605e5c", 1.8)}</svg></LayoutButton>
            <Arrows>
              <svg width="6" height="10" viewBox="0 0 6 10"><path d="M6 0v10L0 5z" fill="#c8c6c4" /></svg>
              <svg width="6" height="10" viewBox="0 0 6 10"><path d="M0 0v10l6-5z" fill="#c8c6c4" /></svg>
            </Arrows>
            <PageTab $active>Page 2</PageTab>
            <PageTab>Page 1</PageTab>
            <AddPage aria-label="New page"><svg width="14" height="14" viewBox="0 0 14 14">{ln("M7 0v14M0 7h14", "#fff", 4)}</svg></AddPage>
          </PageTabs>
        </Center>

        <SidePane>
          <PaneHead><h2>Visualizations</h2><Double /></PaneHead>
          <BuildTitle>Build visual</BuildTitle>
          <ModeRow>
            <ModeButton $on aria-label="Build visual">
              <svg width="30" height="30" viewBox="0 0 30 30">
                {ln("M0 1h24", INK, 1.4)}
                <rect x="1" y="7" width="28" height="8" fill={GREEN} stroke="#111" strokeWidth="1.400" strokeDasharray="2 2" />
                <rect x="1" y="21" width="28" height="8" fill={GREEN} stroke="#111" strokeWidth="1.400" strokeDasharray="2 2" />
              </svg>
            </ModeButton>
            <ModeButton aria-label="Format page">
              <svg width="30" height="30" viewBox="0 0 30 30">{ln("M5 29H1V1h12l9 9v2M13 1v9h9M8 29q5 0 5-4 3-4 6-1 3 4-3 5-4 1-8 0zM17 22L28 11q3 0 1 2L19 24", "#252423", 1.5)}</svg>
            </ModeButton>
          </ModeRow>
          <Notch><svg width="20" height="10" viewBox="0 0 20 10">{ln("M0 9.500l10-9 10 9", "#8a8886", 1.2)}</svg></Notch>
          <Gallery>
            {visuals.map(([name, art]) => (
              <VisualButton key={name} aria-label={name}><svg width="24" height="24" viewBox="0 0 24 24" overflow="visible">{art}</svg></VisualButton>
            ))}
            <VisualButton aria-label="More visuals"><svg width="20" height="20" viewBox="0 0 20 20"><path d="M1 6h2v2H1zM9 6h2v2H9zM17 6h2v2h-2z" fill="#252423" /></svg></VisualButton>
          </Gallery>
          <Fields>
            <FieldTitle $h={30}>Values</FieldTitle>
            <DropBox>Add data fields here</DropBox>
            <Switches>
              <FieldTitle $h={24}>Drill through</FieldTitle>
              <SwitchRow>Cross-report<Toggle><input type="checkbox" role="switch" />Off</Toggle></SwitchRow>
              <SwitchRow>Keep all filters<Toggle><input type="checkbox" role="switch" />Off</Toggle></SwitchRow>
            </Switches>
            <DropBox>Add drill-through fields here</DropBox>
          </Fields>
        </SidePane>

        <SidePane>
          <PaneHead><h2>Data</h2><Double /></PaneHead>
          <DataSearch><Lens c="#605e5c" s={18} /><input type="search" placeholder="Search" aria-label="Search data" /></DataSearch>
          {["master_sells_sheet", "Targets Table"].map((t) => (
            <DataItem key={t}>
              <svg width="10" height="16" viewBox="0 0 10 16">{ln("M2 1l7 7-7 7", INK, 1.4)}</svg>
              <svg width="16" height="16" viewBox="0 0 16 16"><rect x="1" y="1" width="14" height="14" rx="3" fill="none" stroke={INK} strokeWidth="1.400" />{ln("M1 5.500h14M1 10.500h14M5.500 1v14M10.500 1v14", INK, 1.3)}</svg>
              {t}
            </DataItem>
          ))}
        </SidePane>
      </Workspace>

      <StatusBar>
        <span>Page 1 of 2</span>
        <ZoomMark aria-label="Zoom out">-</ZoomMark>
        <ZoomRange type="range" min="10" max="190" defaultValue="82" aria-label="Zoom" />
        <ZoomMark aria-label="Zoom in">+</ZoomMark>
        <ZoomValue>83%</ZoomValue>
        <svg width="21" height="16" viewBox="0 0 21 16">{ln("M1 1h19v14H1z", "#605e5c", 1.6)}{ln("M4 6V4h3M14 4h3v2M17 10v2h-3M7 12H4v-2", "#605e5c", 1.3)}</svg>
      </StatusBar>

      <Taskbar>
        <Weather>
          <svg width="39" height="46" viewBox="0 0 39 46">
            <path d="M9 33a7 7 0 0 1-1-14q2-8 10-8t10 8q5 1 5 7t-6 7z" fill="#a9c4f5" />
            <path d="M17 20q4 5 2 8-2 2-4 0-2-3 2-8zM12 28q5 6 3 10-3 3-6 0-2-4 3-10zM23 28q5 6 3 10-3 3-6 0-2-4 3-10z" fill="#1c6ff0" />
            <Badge c="#c42b1c" t="7" x={27} y={10} />
          </svg>
          <span><span>29°C</span><span>Heavy rain</span></span>
        </Weather>
        <StartButton aria-label="Start"><svg width="30" height="30" viewBox="0 0 30 30"><path d="M0 0h14v14H0zM15 0h14v14H15zM0 15h14v14H0zM15 15h14v14H15z" fill="#3fbdf8" /></svg></StartButton>
        <TaskSearch>
          <Lens c="#222" />
          <input type="search" placeholder="Search" aria-label="Search Windows" />
          <svg width="48" height="30" viewBox="0 0 48 30">
            <path d="M2 10L12 1l17 7v12L2 29z" fill="#7a3f22" />
            <path d="M2 10L12 1l17 7-27 7z" fill="#b87352" />
            {ln("M2 21l27-7", "#e3b48f", 2)}
            <circle cx="39" cy="15" r="7" fill="#9a5b3a" />
            <circle cx="34" cy="22" r="8" fill="#6d3a20" />
            {ln("M29 16q5-5 10 1M34 10q5-4 9 1", "#e8cdb4", 2.5)}
          </svg>
        </TaskSearch>
        {tasks.map(([name, mark, art]) => (
          <TaskIcon key={name} $mark={mark} aria-label={name}><svg width="42" height="40" viewBox="-1 1 42 40" overflow="visible">{art}</svg></TaskIcon>
        ))}
        <Tray>
          <TrayItem $w={40} aria-label="Hidden icons"><svg width="16" height="10" viewBox="0 0 16 10">{ln("M1 9l7-7 7 7", "#fff", 1.8)}</svg></TrayItem>
          <TrayItem $w={40} aria-label="OneDrive"><svg width="22" height="22" viewBox="0 0 22 22"><path d="M4 17q-4-1-3-5 1-3 4-3 1-6 6-6 4 0 6 5 4 1 4 5t-4 4z" fill="#aab0b2" /><circle cx="16" cy="16" r="6" fill="#4cc2ff" />{ln("M16 15v4M16 12v1.500", "#111", 1.6)}</svg></TrayItem>
          <TrayText $w={56}><span>ENG</span><span>IN</span></TrayText>
          <TrayItem $w={96} aria-label="Network, volume and battery">
            <svg width="22" height="18" viewBox="0 0 22 18">{ln("M1 6q10-9 20 0M4 9.500q7-6 14 0M7 13q4-3.500 8 0", "#fff", 1.6)}<circle cx="11" cy="15.500" r="1.800" fill="#fff" /></svg>
            <svg width="22" height="16" viewBox="0 0 22 16">{ln("M1 5h3l5-4v14l-5-4H1zM13 5l6 6M19 5l-6 6", "#fff", 1.5)}</svg>
            <svg width="22" height="18" viewBox="0 0 22 18">{ln("M5 5h12q2 0 2 2v7q0 2-2 2H4q-2 0-2-2v-3", "#fff", 1.5)}<path d="M7 7h10v7H4zM20 8h2v5h-2zM4 0h4L6 4h3L2 12l2-5H1z" fill="#fff" /></svg>
          </TrayItem>
          <TrayText $w={90} $end><span>16:35</span><span>07-07-2025</span></TrayText>
        </Tray>
      </Taskbar>

      <Tooltip role="tooltip">
        <strong>Cross-report</strong>
        Allows other reports to use this page as a drillthrough destination.
      </Tooltip>
    </Shell>
  );
}
